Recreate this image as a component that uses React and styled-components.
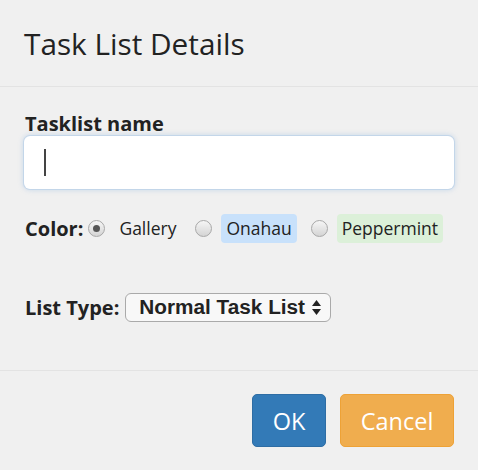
import styled, { createGlobalStyle } from "styled-components";

const GlobalStyle = createGlobalStyle`
  html, body {
    margin: 0;
    padding: 0;
    background: #f0f0f0;
  }
  body {
    font-family: "Open Sans", "Noto Sans", sans-serif;
    color: #222;
  }
`;

const Modal = styled.div`
  width: 478px;
  height: 470px;
  display: flex;
  flex-direction: column;
  background: #f0f0f0;
`;

const Header = styled.header`
  height: 87px;
  box-sizing: border-box;
  padding: 0 24px;
  display: flex;
  align-items: center;
  border-bottom: 1px solid #e3e3e3;
`;

const Title = styled.h1`
  margin: 0;
  font-size: 29.75px;
  font-weight: 400;
  color: #222;
`;

const Body = styled.section`
  flex: 1;
  padding: 25px 24px 0 24px;
  display: flex;
  flex-direction: column;
`;

const FieldLabel = styled.label`
  font-size: 20px;
  font-weight: 700;
  padding-left: 1px;
  line-height: 24px;
  color: #222;
`;

const NameInput = styled.div`
  height: 53px;
  box-sizing: border-box;
  background: #fff;
  border-radius: 6px;
  box-shadow: 0 0 0 1px rgba(170, 200, 230, 0.45), 0 0 5px 1px rgba(120, 170, 220, 0.35);
  display: flex;
  align-items: center;
  padding-left: 20px;
`;

const Caret = styled.span`
  width: 2px;
  height: 27px;
  background: #444;
`;

const Row = styled.div`
  display: flex;
  align-items: center;
  margin-top: ${(p) => p.$top}px;
  height: 30px;
`;

const RowLabel = styled.span`
  font-size: 20px;
  font-weight: 700;
  padding-left: 1px;
  color: #222;
  margin-right: ${(p) => p.$gap}px;
`;

const Radio = styled.span`
  width: 17px;
  height: 17px;
  border-radius: 50%;
  box-sizing: border-box;
  border: 1px solid #a8a8a8;
  background: linear-gradient(#f6f6f6, #d4d4d4);
  display: flex;
  align-items: center;
  justify-content: center;
  margin-right: 9px;
  flex-shrink: 0;

  &::after {
    content: "";
    width: 7px;
    height: 7px;
    border-radius: 50%;
    background: ${(p) => (p.$checked ? "#555" : "transparent")};
  }
`;

const Swatch = styled.span`
  font-size: 17.5px;
  line-height: 29px;
  padding: 0 5px;
  border-radius: 4px;
  background: ${(p) => p.$bg};
  color: #222;
  margin-right: ${(p) => p.$gap}px;
`;

const Select = styled.div`
  height: 29px;
  box-sizing: border-box;
  border: 1.5px solid #aaa;
  border-radius: 6px;
  background: #f8f8f8;
  display: flex;
  align-items: center;
  padding: 0 9px 0 13px;
  font-family: "Liberation Sans", Arial, sans-serif;
  font-weight: 700;
  font-size: 20.75px;
  color: #222;
  gap: 7px;
`;

const Footer = styled.footer`
  border-top: 1px solid #e3e3e3;
  padding: 23px 24px 23px 0;
  display: flex;
  justify-content: flex-end;
  gap: 14px;
`;

const Button = styled.button`
  height: 53px;
  width: ${(p) => p.$w}px;
  border-radius: 5px;
  border: 1px solid ${(p) => p.$border};
  background: ${(p) => p.$bg};
  color: #fff;
  font-family: "Open Sans", "Noto Sans", sans-serif;
  font-size: 23.5px;
  padding: 0;
`;

const Arrows = () => (
  <svg width="9" height="15" viewBox="0 0 9 15">
    <path d="M4.5 0 L9 6 H0 Z" fill="#222" />
    <path d="M4.5 15 L9 9 H0 Z" fill="#222" />
  </svg>
);

export default function App() {
  return (
    <>
      <GlobalStyle />
      <Modal>
        <Header>
          <Title>Task List Details</Title>
        </Header>
        <Body>
          <FieldLabel>Tasklist name</FieldLabel>
          <NameInput>
            <Caret />
          </NameInput>
          <Row $top={24}>
            <RowLabel $gap={5}>Color:</RowLabel>
            <Radio $checked />
            <Swatch $bg="transparent" $gap={14}>Gallery</Swatch>
            <Radio />
            <Swatch $bg="#c8e1fb" $gap={14}>Onahau</Swatch>
            <Radio />
            <Swatch $bg="#dcf0d9" $gap={0}>Peppermint</Swatch>
          </Row>
          <Row $top={49}>
            <RowLabel $gap={6}>List Type:</RowLabel>
            <Select>
              Normal Task List
              <Arrows />
            </Select>
          </Row>
        </Body>
        <Footer>
          <Button $bg="#337ab7" $border="#2e6da4" $w={74}>OK</Button>
          <Button $bg="#f0ad4e" $border="#eea236" $w={114}>Cancel</Button>
        </Footer>
      </Modal>
    </>
  );
}
